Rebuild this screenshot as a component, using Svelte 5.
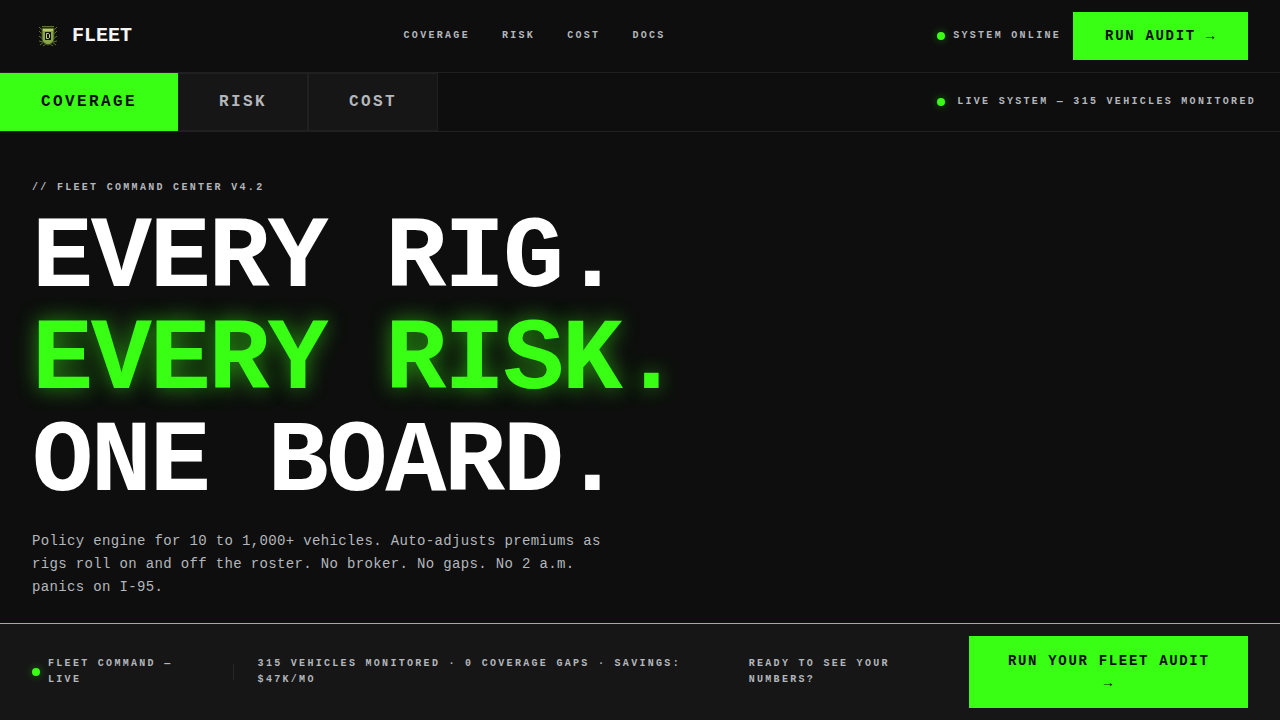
<script>
  const links = ['Coverage', 'Risk', 'Cost', 'Docs'];
  const tabs = ['Coverage', 'Risk', 'Cost'];
  let active = $state('Coverage');
</script>

<div class="page">
  <header class="topbar">
    <a class="brand" href="#home">
      <svg class="crest" viewBox="0 0 32 32" aria-hidden="true">
        <g fill="none" stroke="#5f7038" stroke-width="1">
          <path d="M7 7l4 4M25 7l-4 4M7 11l4 4M25 11l-4 4M7 16l4 3M25 16l-4 3M7 21l4 1M25 21l-4 1M8 25l4-3M24 25l-4-3M11 26l3-2M21 26l-3-2" />
          <path d="M10 6.500h12" />
        </g>
        <path d="M10 8h12v11c0 3-3 5-6 6-3-1-6-3-6-6z" fill="#8aa548" stroke="#34451f" />
        <path d="M11 9h10v2H11z" fill="#b9c96c" />
        <path d="M13 12h6v8h-6z" fill="#11160c" />
        <path d="M14.500 13.500h2l1 1v3l-1 1h-2z" fill="none" stroke="#c6d290" />
      </svg>
      <span>FLEET</span>
    </a>
    <nav class="links" aria-label="Main">
      {#each links as link}
        <a class="label" href={'#' + link.toLowerCase()}>{link}</a>
      {/each}
    </nav>
    <div class="actions">
      <span class="status label"><i class="dot"></i>System online</span>
      <button class="cta">RUN AUDIT →</button>
    </div>
  </header>

  <div class="tabbar">
    <div class="tabs" role="tablist">
      {#each tabs as tab}
        <button
          class="tab"
          class:active={active === tab}
          role="tab"
          aria-selected={active === tab}
          onclick={() => (active = tab)}>{tab}</button>
      {/each}
    </div>
    <span class="status live label"><i class="dot"></i>Live system — 315 vehicles monitored</span>
  </div>

  <main class="hero">
    <p class="label">// Fleet command center v4.2</p>
    <h1>
      <span>EVERY RIG.</span>
      <span class="glow">EVERY RISK.</span>
      <span>ONE BOARD.</span>
    </h1>
    <p class="lead">
      Policy engine for 10 to 1,000+ vehicles. Auto-adjusts premiums as rigs roll on and off the
      roster. No broker. No gaps. No 2 a.m. panics on I-95.
    </p>
  </main>

  <footer class="bottombar">
    <div class="group">
      <span class="status label"><i class="dot"></i>Fleet command — live</span>
      <span class="divider"></span>
      <span class="label">315 vehicles monitored · 0 coverage gaps · savings: $47K/mo</span>
    </div>
    <div class="group prompt">
      <span class="label">Ready to see your numbers?</span>
      <button class="cta">RUN YOUR FLEET AUDIT →</button>
    </div>
  </footer>
</div>

<style>
  :global(body) {
    margin: 0;
    background: #0e0e0e;
  }
  .page {
    --green: #39ff14;
    --line: #202020;
    --panel: #161616;
    --muted: #b4b7bc;
    box-sizing: border-box;
    min-height: 100vh;
    display: flex;
    flex-direction: column;
    background: #0e0e0e;
    color: #fff;
    font-family: 'Liberation Mono', 'Courier New', monospace;
  }
  .label {
    margin: 0;
    font-size: 10px;
    line-height: 16px;
    font-weight: 700;
    letter-spacing: 0.23em;
    text-transform: uppercase;
    color: var(--muted);
  }
  a {
    text-decoration: none;
  }
  .topbar {
    display: flex;
    align-items: center;
    justify-content: space-between;
    padding: 12px 32px;
    border-bottom: 1px solid var(--line);
  }
  .brand {
    display: flex;
    align-items: center;
    gap: 8px;
    color: #f5f5f5;
    font-size: 20px;
    line-height: 24px;
    font-weight: 700;
  }
  .crest {
    width: 32px;
    height: 32px;
  }
  .links {
    display: flex;
    gap: 32px;
  }
  .actions {
    display: flex;
    align-items: center;
    gap: 12px;
  }
  .status {
    display: flex;
    align-items: center;
    gap: 8px;
  }
  .dot {
    flex: none;
    width: 8px;
    height: 8px;
    border-radius: 50%;
    background: var(--green);
    box-shadow: 0 0 8px rgba(57, 255, 20, 0.4);
  }
  .cta {
    min-height: 48px;
    padding: 14px 32px;
    border: 0;
    background: var(--green);
    color: #0e0e0e;
    font: 700 14px/22px 'Liberation Mono', 'Courier New', monospace;
    letter-spacing: 0.12em;
    cursor: pointer;
  }
  .topbar .cta {
    padding: 13px 32px;
  }
  .tabbar {
    display: flex;
    align-items: center;
    justify-content: space-between;
    padding-right: 24px;
    border-bottom: 1px solid var(--line);
  }
  .tabs {
    display: flex;
  }
  .tab {
    padding: 16px 40px;
    border: 1px solid var(--line);
    background: var(--panel);
    color: var(--muted);
    font: 700 16px/24px 'Liberation Mono', 'Courier New', monospace;
    letter-spacing: 0.15em;
    text-transform: uppercase;
    cursor: pointer;
  }
  .tab.active {
    border-color: var(--green);
    background: var(--green);
    color: #0e0e0e;
  }
  .live {
    gap: 12px;
  }
  .hero {
    flex: 1;
    padding: 48px 32px 24px;
  }
  h1 {
    margin: 12px 0 16px;
    font-size: 102px;
    line-height: 102px;
    font-weight: 700;
    letter-spacing: -0.023em;
  }
  h1 span {
    display: block;
  }
  .glow {
    color: var(--green);
    text-shadow:
      0 0 20px rgba(57, 255, 20, 0.5),
      0 0 40px rgba(57, 255, 20, 0.1);
  }
  .lead {
    max-width: 576px;
    margin: 0;
    color: var(--muted);
    font-size: 14px;
    line-height: 23px;
    letter-spacing: 0.025em;
  }
  .bottombar {
    display: flex;
    align-items: center;
    justify-content: space-between;
    gap: 16px;
    padding: 12px 32px;
    border-top: 1px solid var(--green);
    background: var(--panel);
  }
  .group {
    display: flex;
    align-items: center;
    gap: 24px;
  }
  .prompt {
    gap: 12px;
  }
  .divider {
    flex: none;
    width: 1px;
    height: 16px;
    background: #262626;
  }
</style>
